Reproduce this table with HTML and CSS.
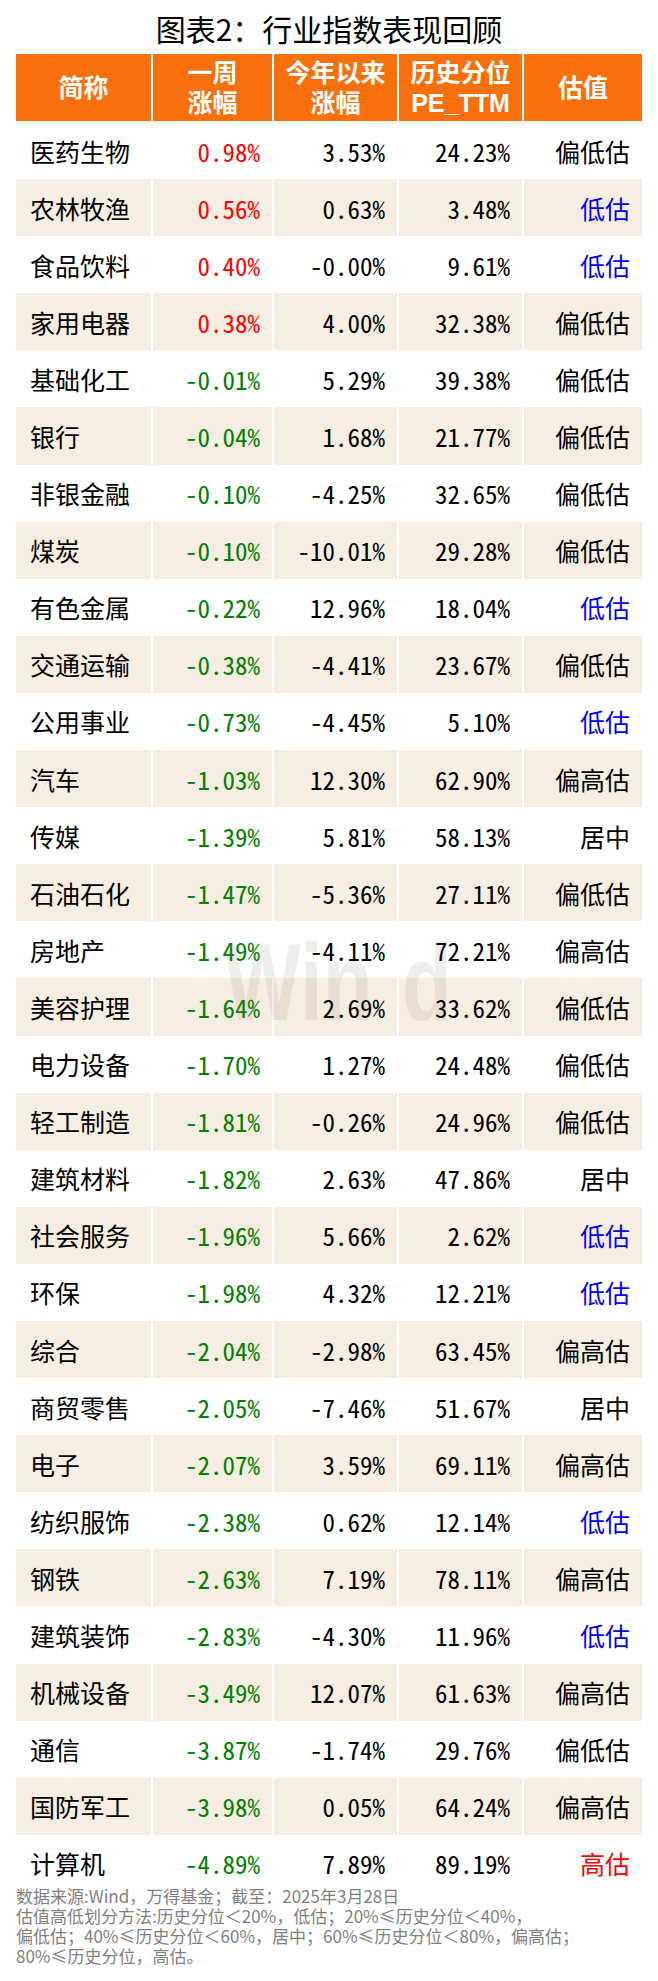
FILE: index.html
```html
<!DOCTYPE html>
<html lang="zh-CN">
<head>
<meta charset="utf-8">
<title>行业指数表现回顾</title>
<link rel="stylesheet" href="styles.css">
</head>
<body>
<div class="page">
  <h1 class="title">图表2：行业指数表现回顾</h1>
  <div class="table">
    <div class="th">简称</div>
    <div class="th">一周<br>涨幅</div>
    <div class="th">今年以来<br>涨幅</div>
    <div class="th">历史分位<br>PE_TTM</div>
    <div class="th">估值</div>

    <div class="row"><div class="c name">医药生物</div><div class="c num up">0.98%</div><div class="c num">3.53%</div><div class="c num">24.23%</div><div class="c val">偏低估</div></div>
    <div class="row alt"><div class="c name">农林牧渔</div><div class="c num up">0.56%</div><div class="c num">0.63%</div><div class="c num">3.48%</div><div class="c val low">低估</div></div>
    <div class="row"><div class="c name">食品饮料</div><div class="c num up">0.40%</div><div class="c num">-0.00%</div><div class="c num">9.61%</div><div class="c val low">低估</div></div>
    <div class="row alt"><div class="c name">家用电器</div><div class="c num up">0.38%</div><div class="c num">4.00%</div><div class="c num">32.38%</div><div class="c val">偏低估</div></div>
    <div class="row"><div class="c name">基础化工</div><div class="c num down">-0.01%</div><div class="c num">5.29%</div><div class="c num">39.38%</div><div class="c val">偏低估</div></div>
    <div class="row alt"><div class="c name">银行</div><div class="c num down">-0.04%</div><div class="c num">1.68%</div><div class="c num">21.77%</div><div class="c val">偏低估</div></div>
    <div class="row"><div class="c name">非银金融</div><div class="c num down">-0.10%</div><div class="c num">-4.25%</div><div class="c num">32.65%</div><div class="c val">偏低估</div></div>
    <div class="row alt"><div class="c name">煤炭</div><div class="c num down">-0.10%</div><div class="c num">-10.01%</div><div class="c num">29.28%</div><div class="c val">偏低估</div></div>
    <div class="row"><div class="c name">有色金属</div><div class="c num down">-0.22%</div><div class="c num">12.96%</div><div class="c num">18.04%</div><div class="c val low">低估</div></div>
    <div class="row alt"><div class="c name">交通运输</div><div class="c num down">-0.38%</div><div class="c num">-4.41%</div><div class="c num">23.67%</div><div class="c val">偏低估</div></div>
    <div class="row"><div class="c name">公用事业</div><div class="c num down">-0.73%</div><div class="c num">-4.45%</div><div class="c num">5.10%</div><div class="c val low">低估</div></div>
    <div class="row alt"><div class="c name">汽车</div><div class="c num down">-1.03%</div><div class="c num">12.30%</div><div class="c num">62.90%</div><div class="c val">偏高估</div></div>
    <div class="row"><div class="c name">传媒</div><div class="c num down">-1.39%</div><div class="c num">5.81%</div><div class="c num">58.13%</div><div class="c val">居中</div></div>
    <div class="row alt"><div class="c name">石油石化</div><div class="c num down">-1.47%</div><div class="c num">-5.36%</div><div class="c num">27.11%</div><div class="c val">偏低估</div></div>
    <div class="row"><div class="c name">房地产</div><div class="c num down">-1.49%</div><div class="c num">-4.11%</div><div class="c num">72.21%</div><div class="c val">偏高估</div></div>
    <div class="row alt"><div class="c name">美容护理</div><div class="c num down">-1.64%</div><div class="c num">2.69%</div><div class="c num">33.62%</div><div class="c val">偏低估</div></div>
    <div class="row"><div class="c name">电力设备</div><div class="c num down">-1.70%</div><div class="c num">1.27%</div><div class="c num">24.48%</div><div class="c val">偏低估</div></div>
    <div class="row alt"><div class="c name">轻工制造</div><div class="c num down">-1.81%</div><div class="c num">-0.26%</div><div class="c num">24.96%</div><div class="c val">偏低估</div></div>
    <div class="row"><div class="c name">建筑材料</div><div class="c num down">-1.82%</div><div class="c num">2.63%</div><div class="c num">47.86%</div><div class="c val">居中</div></div>
    <div class="row alt"><div class="c name">社会服务</div><div class="c num down">-1.96%</div><div class="c num">5.66%</div><div class="c num">2.62%</div><div class="c val low">低估</div></div>
    <div class="row"><div class="c name">环保</div><div class="c num down">-1.98%</div><div class="c num">4.32%</div><div class="c num">12.21%</div><div class="c val low">低估</div></div>
    <div class="row alt"><div class="c name">综合</div><div class="c num down">-2.04%</div><div class="c num">-2.98%</div><div class="c num">63.45%</div><div class="c val">偏高估</div></div>
    <div class="row"><div class="c name">商贸零售</div><div class="c num down">-2.05%</div><div class="c num">-7.46%</div><div class="c num">51.67%</div><div class="c val">居中</div></div>
    <div class="row alt"><div class="c name">电子</div><div class="c num down">-2.07%</div><div class="c num">3.59%</div><div class="c num">69.11%</div><div class="c val">偏高估</div></div>
    <div class="row"><div class="c name">纺织服饰</div><div class="c num down">-2.38%</div><div class="c num">0.62%</div><div class="c num">12.14%</div><div class="c val low">低估</div></div>
    <div class="row alt"><div class="c name">钢铁</div><div class="c num down">-2.63%</div><div class="c num">7.19%</div><div class="c num">78.11%</div><div class="c val">偏高估</div></div>
    <div class="row"><div class="c name">建筑装饰</div><div class="c num down">-2.83%</div><div class="c num">-4.30%</div><div class="c num">11.96%</div><div class="c val low">低估</div></div>
    <div class="row alt"><div class="c name">机械设备</div><div class="c num down">-3.49%</div><div class="c num">12.07%</div><div class="c num">61.63%</div><div class="c val">偏高估</div></div>
    <div class="row"><div class="c name">通信</div><div class="c num down">-3.87%</div><div class="c num">-1.74%</div><div class="c num">29.76%</div><div class="c val">偏低估</div></div>
    <div class="row alt"><div class="c name">国防军工</div><div class="c num down">-3.98%</div><div class="c num">0.05%</div><div class="c num">64.24%</div><div class="c val">偏高估</div></div>
    <div class="row"><div class="c name">计算机</div><div class="c num down">-4.89%</div><div class="c num">7.89%</div><div class="c num">89.19%</div><div class="c val high">高估</div></div>
  </div>
  <p class="note">数据来源:Wind，万得基金；截至：2025年3月28日<br>估值高低划分方法:历史分位＜20%，低估；20%≤历史分位＜40%，<br>偏低估；40%≤历史分位＜60%，居中；60%≤历史分位＜80%，偏高估；<br>80%≤历史分位，高估。</p>
  <div class="watermark"><span>Win</span><span class="wm-d">d</span></div>
</div>
</body>
</html>
```

FILE: styles.css
```css
html, body {
  margin: 0;
  padding: 0;
  background: #ffffff;
}

.page {
  position: relative;
  width: 658px;
  padding: 8px 16px 0;
  box-sizing: border-box;
  font-family: "Noto Sans CJK SC", "Noto Sans", sans-serif;
  color: #000;
}

.title {
  margin: 0;
  font-size: 30px;
  line-height: 40px;
  font-weight: 400;
  text-align: center;
  height: 40px;
}

.table {
  margin-top: 6px;
  display: grid;
  grid-template-columns: 135px 119px 123px 123px 118px;
  column-gap: 2px;
  width: 626px;
}

.th {
  background: #f8700b;
  color: #ffffff;
  font-family: "Liberation Sans", "Noto Sans CJK SC", sans-serif;
  font-weight: 700;
  font-size: 25px;
  line-height: 30px;
  height: 67px;
  display: flex;
  align-items: center;
  justify-content: center;
  text-align: center;
  margin-bottom: 1px;
}

.row {
  display: contents;
}

.c {
  height: 57.1px;
  display: flex;
  align-items: center;
  font-size: 25px;
  line-height: 30px;
}

.row.alt .c {
  background: #f6eee2;
}

.name {
  padding-left: 14px;
}

.num {
  justify-content: flex-end;
  padding-right: 12px;
  font-family: "Noto Sans Mono CJK SC", "DejaVu Sans Mono", monospace;
}

.val {
  justify-content: flex-end;
  padding-right: 12px;
}

.up { color: #ff0000; }
.down { color: #008000; }
.low { color: #0000ff; }
.high { color: #ff0000; }

.note {
  margin: -6px 0 0;
  font-size: 17px;
  line-height: 20px;
  color: #7f7f7f;
}

.watermark {
  position: absolute;
  left: 224px;
  top: 922px;
  font-family: "Liberation Sans", sans-serif;
  font-weight: 700;
  font-size: 110px;
  line-height: 120px;
  color: rgba(120, 100, 80, 0.11);
  transform: scaleX(0.74);
  transform-origin: left top;
  pointer-events: none;
  white-space: nowrap;
}

.wm-d {
  margin-left: 40px;
}
```
